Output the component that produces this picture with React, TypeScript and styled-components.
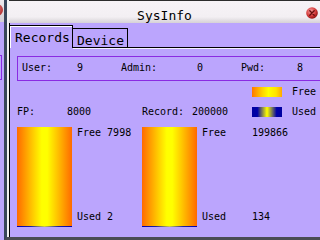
import React from "react";
import styled, { createGlobalStyle } from "styled-components";

const PURPLE = "#bba5fd";
const VIOLET = "#8a2be2";

const Global = createGlobalStyle`
  html, body { margin: 0; padding: 0; background: ${PURPLE}; }
  #root { width: 320px; height: 240px; overflow: hidden; }
`;

const Desktop = styled.div`
  display: flex;
  width: 320px;
  height: 240px;
  overflow: hidden;
  background: ${PURPLE};
  font-family: "DejaVu Sans Mono", monospace;
  color: #000;
`;

const BackEdge = styled.div`
  width: 4px;
  flex: none;
  display: flex;
  flex-direction: column;
  overflow: hidden;
`;

const BackTitle = styled.div`
  height: 22px;
  flex: none;
  display: flex;
  align-items: flex-start;
  padding-top: 4px;
  box-sizing: border-box;
  background: linear-gradient(#ece8ec, #d4d0d4);
  overflow: hidden;
`;

const BackClose = styled.div`
  flex: none;
  width: 12px;
  height: 12px;
  margin-left: -9px;
  border-radius: 50%;
  background: radial-gradient(circle at 40% 35%, #e88080, #a01818);
`;

const BackBox = styled.div`
  margin-top: 33px;
  width: 2px;
  height: 25px;
  box-sizing: border-box;
  border: 1px solid ${VIOLET};
  border-left: none;
`;

const FrontWindow = styled.div`
  flex: 1;
  min-width: 0;
  display: flex;
  flex-direction: column;
  border-left: 3px solid #38465a;
  border-bottom: 3px solid #4a4c54;
`;

const Inner = styled.div`
  flex: 1;
  min-height: 0;
  display: flex;
  flex-direction: column;
  border-left: 2px solid #f2f2f2;
`;

const TitleBar = styled.div`
  height: 23px;
  flex: none;
  box-sizing: border-box;
  border-top: 1px solid #2c2c2c;
  padding-top: 7px;
  background: linear-gradient(#f7f3f7 0%, #f3eff3 72%, #d6d2d6 100%);
  display: grid;
  grid-template-columns: 14px 1fr 14px;
  align-items: start;
`;

const Title = styled.div`
  grid-column: 2;
  text-align: center;
  font-size: 13px;
  line-height: 15px;
`;

const CloseBtn = styled.svg`
  grid-column: 3;
  width: 12px;
  height: 12px;
  margin-top: -1px;
  display: block;
`;

const Content = styled.div`
  flex: 1;
  min-height: 0;
  display: flex;
  flex-direction: column;
  border-left: 1px solid #000;
  padding-top: 2px;
  background: ${PURPLE};
`;

const TabRow = styled.div`
  display: flex;
  align-items: flex-end;
  height: 23px;
  flex: none;
`;

const Tab = styled.div<{ $active?: boolean }>`
  box-sizing: border-box;
  font-size: 13px;
  line-height: 15px;
  white-space: nowrap;
  border-top: 1px solid #000;
  border-right: 1px solid #000;
  padding-top: 4px;
  ${(p) =>
    p.$active
      ? `height: 23px; width: 63px; padding-left: 5px; box-shadow: inset 1px 1px 0 #ffffff;`
      : `height: 20px; width: 55px; padding-left: 4px; border-bottom: 1px solid #000; box-shadow: 0 1px 0 #f4f0ff;`}
`;

const TabFiller = styled.div`
  flex: 1;
  height: 1px;
  border-bottom: 1px solid #000;
  box-sizing: border-box;
  box-shadow: 0 1px 0 #f4f0ff;
`;

const Pane = styled.div`
  flex: 1;
  display: flex;
  flex-direction: column;
  padding: 8px 0 0 7px;
  font-size: 10px;
  line-height: 12px;
`;

const InfoBox = styled.div`
  height: 25px;
  box-sizing: border-box;
  border: 1px solid ${VIOLET};
  margin-right: -12px;
  padding: 0 0 1px 4px;
  display: grid;
  grid-template-columns: 55px 44px 76px 44px 56px auto;
  align-items: center;
  white-space: nowrap;
`;

const LegendGrid = styled.div`
  margin-top: 6px;
  display: grid;
  grid-template-columns: 50px 75px 50px 60px 40px auto;
  grid-template-rows: 10px 10px;
  row-gap: 10px;
  line-height: 10px;
  white-space: nowrap;
`;

const Swatch = styled.div<{ $kind: "free" | "used" }>`
  grid-column: 5;
  width: 30px;
  height: 10px;
  background: ${(p) =>
    p.$kind === "free"
      ? "linear-gradient(90deg, #ff7800 0%, #ffd400 35%, #ffff00 55%, #ffe400 80%, #ffa800 100%)"
      : "linear-gradient(90deg, #0000a0 0%, #0000a8 18%, #ffff00 50%, #0000a8 82%, #0000a0 100%)"};
`;

const Cell = styled.div<{ $col: number }>`
  grid-column: ${(p) => p.$col};
`;

const BarsRow = styled.div`
  margin-top: 10px;
  display: flex;
  height: 100px;
`;

const BarGroup = styled.div<{ $width?: number }>`
  display: flex;
  gap: 5px;
  ${(p) => (p.$width ? `width: ${p.$width}px; flex: none;` : `flex: 1;`)}
`;

const Bar = styled.div`
  width: 55px;
  height: 100px;
  flex: none;
  display: flex;
  flex-direction: column;
`;

const FreePart = styled.div`
  flex: 1;
  background: linear-gradient(90deg, #ff6a00 0%, #ffc800 28%, #ffff00 45%, #ffff00 55%, #ffc800 72%, #ff6a00 100%);
`;

const UsedPart = styled.div`
  flex: none;
  background: linear-gradient(90deg, #0000b0 0%, #2020a0 25%, #c8c850 50%, #2020a0 75%, #0000b0 100%);
`;

const BarLabels = styled.div`
  display: flex;
  flex-direction: column;
  justify-content: space-between;
  padding-bottom: 4px;
  white-space: nowrap;
`;

const LabelPair = styled.div`
  display: grid;
  grid-template-columns: 50px auto;
`;

function Meter({ used, total }: { used: number; total: number }) {
  const h = Math.max(1, Math.round((used / total) * 100));
  return (
    <Bar>
      <FreePart />
      <UsedPart style={{ height: h }} />
    </Bar>
  );
}

export default function App() {
  return (
    <>
      <Global />
      <Desktop>
        <BackEdge>
          <BackTitle>
            <BackClose />
          </BackTitle>
          <BackBox />
        </BackEdge>
        <FrontWindow>
          <Inner>
            <TitleBar>
              <Title>SysInfo</Title>
              <CloseBtn viewBox="0 0 12 12">
                <defs>
                  <radialGradient id="cg" cx="40%" cy="35%" r="65%">
                    <stop offset="0%" stopColor="#f4a0a0" />
                    <stop offset="60%" stopColor="#d84040" />
                    <stop offset="100%" stopColor="#901010" />
                  </radialGradient>
                </defs>
                <circle cx="6" cy="6" r="5.8" fill="url(#cg)" />
                <path d="M3.8 3.8 L8.2 8.2 M8.2 3.8 L3.8 8.2" stroke="#6a0c0c" strokeWidth="1.4" strokeLinecap="round" />
              </CloseBtn>
            </TitleBar>
            <Content>
              <TabRow>
                <Tab $active>Records</Tab>
                <Tab>Device</Tab>
                <TabFiller />
              </TabRow>
              <Pane>
                <InfoBox>
                  <span>User:</span>
                  <span>9</span>
                  <span>Admin:</span>
                  <span>0</span>
                  <span>Pwd:</span>
                  <span>8</span>
                </InfoBox>
                <LegendGrid>
                  <Swatch $kind="free" />
                  <Cell $col={6}>Free</Cell>
                  <Cell $col={1}>FP:</Cell>
                  <Cell $col={2}>8000</Cell>
                  <Cell $col={3}>Record:</Cell>
                  <Cell $col={4}>200000</Cell>
                  <Swatch $kind="used" />
                  <Cell $col={6}>Used</Cell>
                </LegendGrid>
                <BarsRow>
                  <BarGroup $width={125}>
                    <Meter used={2} total={8000} />
                    <BarLabels>
                      <span>Free 7998</span>
                      <span>Used 2</span>
                    </BarLabels>
                  </BarGroup>
                  <BarGroup>
                    <Meter used={134} total={200000} />
                    <BarLabels>
                      <LabelPair>
                        <span>Free</span>
                        <span>199866</span>
                      </LabelPair>
                      <LabelPair>
                        <span>Used</span>
                        <span>134</span>
                      </LabelPair>
                    </BarLabels>
                  </BarGroup>
                </BarsRow>
              </Pane>
            </Content>
          </Inner>
        </FrontWindow>
      </Desktop>
    </>
  );
}
